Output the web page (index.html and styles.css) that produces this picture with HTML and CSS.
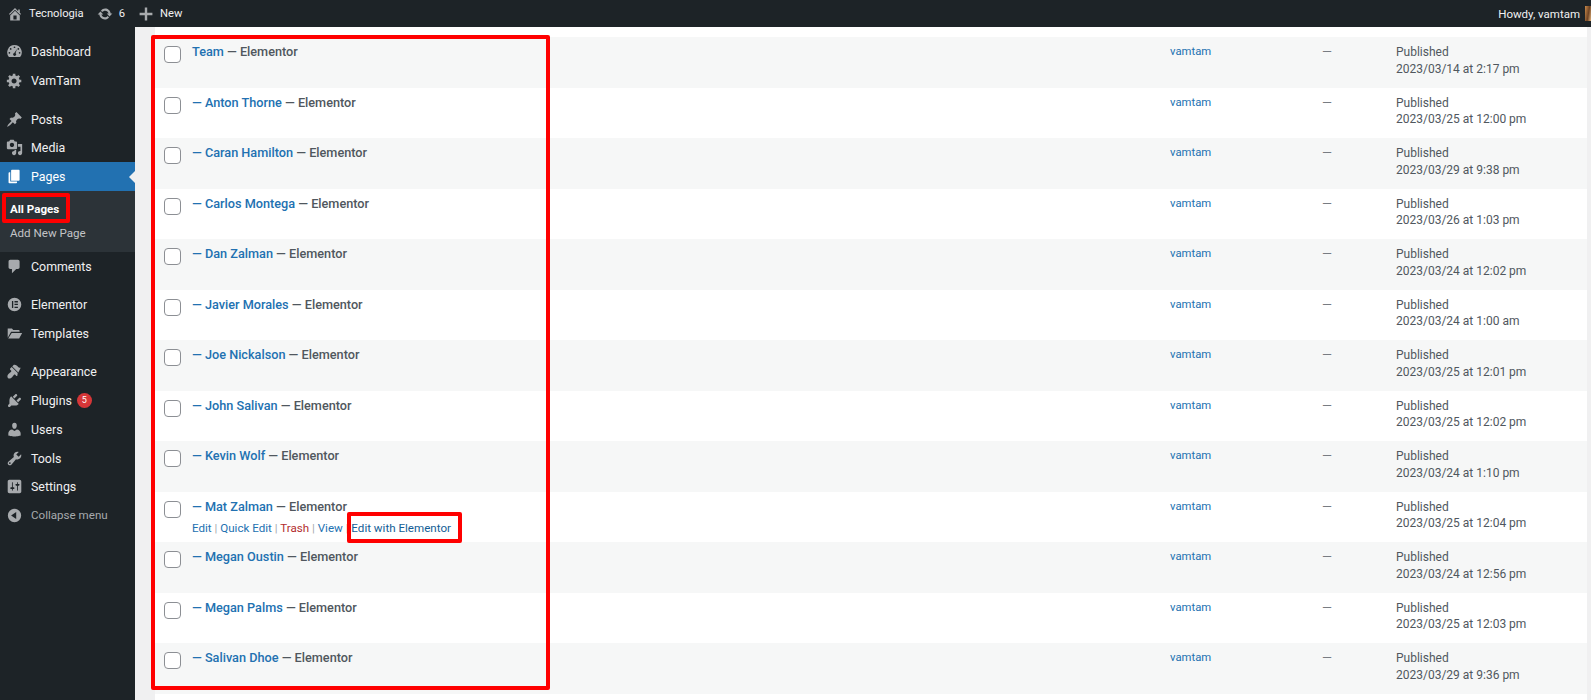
FILE: index.html
```html
<!DOCTYPE html>
<html>
<head>
<meta charset="UTF-8">
<title>Pages - Tecnologia</title>
<link rel="stylesheet" href="styles.css">
</head>
<body>
<div id="adminbar">
	<div class="bar-left">
		<span class="bar-item"><svg viewBox="0 0 20 20"><path d="M16 8.5l1.53 1.53-1.06 1.06L10 4.62l-6.47 6.47-1.06-1.06L10 2.5l4 4v-2h2v4zm-6-2.46l6 5.99V18H4v-5.97zM12 17v-5H8v5h4z"/></svg>Tecnologia</span>
		<span class="bar-item"><svg viewBox="0 0 20 20"><path d="M10.2 3.28c3.53 0 6.43 2.61 6.9 6h2.08l-3.5 4-3.5-4h2.32c-.45-1.97-2.21-3.44-4.3-3.44-1.45 0-2.73.71-3.54 1.8L4.95 5.85c1.26-1.59 3.21-2.57 5.25-2.57zm-.4 13.44c-3.52 0-6.43-2.61-6.9-6H.82l3.5-4c1.17 1.33 2.33 2.67 3.5 4H5.5c.45 1.98 2.21 3.44 4.3 3.44 1.45 0 2.73-.71 3.54-1.8l1.71 1.95c-1.26 1.59-3.21 2.57-5.25 2.57z"/></svg>6</span>
		<span class="bar-item"><svg viewBox="0 0 20 20"><path d="M8.5 2h3v6.500H18v3h-6.500V18h-3v-6.500H2v-3h6.500z"/></svg>New</span>
	</div>
	<div class="bar-right">Howdy, vamtam<span class="avatar"></span></div>
</div>
<div id="wrap">
	<nav id="menu">
		<ul class="group">
			<li><svg viewBox="0 0 20 20"><path d="M10 2.500a8.500 8.500 0 0 0-6.600 13.900h13.200A8.500 8.500 0 0 0 10 2.500zM10 4a1 1 0 1 1 0 2 1 1 0 0 1 0-2zM5.500 6a1 1 0 1 1 0 2 1 1 0 0 1 0-2zm9 0a1 1 0 1 1 0 2 1 1 0 0 1 0-2zM4 10.500a1 1 0 1 1 0 2 1 1 0 0 1 0-2zm12 0a1 1 0 1 1 0 2 1 1 0 0 1 0-2zM13 7l-1.800 5.100a1.700 1.700 0 1 1-1.500-.3z" fill-rule="evenodd"/></svg>Dashboard</li>
			<li><svg viewBox="0 0 20 20"><path d="M18 12h-2.180c-.17.7-.44 1.350-.81 1.930l1.540 1.540-2.100 2.100-1.540-1.540c-.58.36-1.230.63-1.910.79V19H8v-2.180c-.68-.16-1.330-.43-1.910-.79l-1.540 1.540-2.120-2.120 1.540-1.540c-.36-.58-.63-1.230-.79-1.910H1V9.030h2.170c.16-.7.44-1.350.8-1.940L2.430 5.550l2.100-2.100 1.540 1.540c.58-.37 1.240-.64 1.930-.81V2h3v2.180c.68.16 1.330.43 1.910.79l1.540-1.540 2.120 2.120-1.540 1.540c.36.59.64 1.240.8 1.940H18V12zm-8.500 1.500c1.660 0 3-1.340 3-3s-1.340-3-3-3-3 1.340-3 3 1.340 3 3 3z"/></svg>VamTam</li>
		</ul>
		<ul class="group">
			<li><svg viewBox="0 0 20 20"><path d="M10.440 3.020l1.820-1.820 6.360 6.350-1.830 1.820c-1.050-.68-2.480-.57-3.410.36l-.75.750c-.92.930-1.040 2.350-.35 3.410l-1.830 1.820-2.410-2.410-2.800 2.790c-.42.420-3.380 2.710-3.800 2.290s1.870-3.380 2.290-3.800l2.790-2.790-2.410-2.410 1.830-1.830c1.050.69 2.480.57 3.400-.35l.75-.75c.93-.92 1.040-2.350.36-3.410z"/></svg>Posts</li>
			<li><svg viewBox="0 0 20 20"><path d="M13 11V4c0-.55-.45-1-1-1h-1.670L9 1H5L3.670 3H2c-.55 0-1 .45-1 1v7c0 .55.45 1 1 1h10c.55 0 1-.45 1-1zM7 4.500c1.380 0 2.500 1.120 2.500 2.500S8.380 9.500 7 9.500 4.500 8.380 4.500 7 5.620 4.500 7 4.500zM14 6h5v10.500c0 1.380-1.120 2.500-2.500 2.500S14 17.880 14 16.500s1.120-2.500 2.500-2.500c.17 0 .34.020.5.050V9h-3V6zm-4 8.050V13h2v3.500c0 1.380-1.120 2.500-2.500 2.500S7 17.880 7 16.500 8.120 14 9.500 14c.17 0 .34.020.5.050z"/></svg>Media</li>
			<li class="current"><svg viewBox="0 0 20 20"><path d="M6 15V3c0-.55.45-1 1-1h8c.55 0 1 .45 1 1v11c0 .55-.45 1-1 1H6zm-1 1h8v1c0 .55-.45 1-1 1H4c-.55 0-1-.45-1-1V6c0-.55.45-1 1-1h1v11z"/></svg>Pages</li>
		</ul>
		<ul class="submenu">
			<li class="sub-current">All Pages</li>
			<li>Add New Page</li>
		</ul>
		<ul class="group">
			<li><svg viewBox="0 0 20 20"><path d="M5 2h9c1.100 0 2 .9 2 2v7c0 1.100-.9 2-2 2h-2l-5 5v-5H5c-1.100 0-2-.9-2-2V4c0-1.100.9-2 2-2z"/></svg>Comments</li>
		</ul>
		<ul class="group">
			<li><svg viewBox="0 0 20 20"><path fill-rule="evenodd" d="M10 2a8 8 0 1 0 0 16 8 8 0 0 0 0-16zM7 6h1.500v8H7zm3 0h4v1.500h-4zm0 3.200h4v1.500h-4zm0 3.300h4V14h-4z"/></svg>Elementor</li>
			<li><svg viewBox="0 0 20 20"><path d="M2 4h5l1.500 2H15c.6 0 1 .4 1 1v1H6L2 15zM6.700 9.300H19L15.500 16H2.600z"/></svg>Templates</li>
		</ul>
		<ul class="group">
			<li><svg viewBox="0 0 20 20"><path d="M14.480 11.060L7.410 3.990l1.500-1.500c.5-.56 2.300-.47 3.590.32 1.290.8 1.940 2.200 2.770 2.510.83.310 2.020.38 2.020.38zm-.71.71L6.700 4.700 4.930 6.470c-.39.39-.39 1.020 0 1.410l1.060 1.060c.39.39.39 1.030 0 1.420-.6.6-1.780 1.300-2.830 2.350C1.700 14.160 1.100 16.300 2.300 17.500c1.180 1.180 3.340.6 4.800-.86 1.050-1.050 1.750-2.230 2.350-2.830.39-.39 1.030-.39 1.420 0l1.060 1.060c.39.39 1.020.39 1.410 0z"/></svg>Appearance</li>
			<li><svg viewBox="0 0 20 20"><path d="M13.110 4.360L9.870 7.600 8 5.730l3.240-3.240c.35-.34 1.050-.2 1.560.32.520.51.660 1.210.31 1.550zm-8 1.770l.91-1.120 9.010 9.010-1.190.84c-.71.71-2.630 1.160-3.820 1.160H6.140L4.900 17.260c-.59.59-1.540.59-2.120 0-.59-.58-.59-1.530 0-2.120l1.240-1.240v-3.880c0-1.130.48-3.050 1.090-3.890zm7.260 3.970l3.240-3.240c.34-.35 1.040-.21 1.550.31.520.51.660 1.210.31 1.550l-3.240 3.250z"/></svg>Plugins<span class="count">5</span></li>
			<li><svg viewBox="0 0 20 20"><path d="M10 9.250c-2.270 0-2.730-3.440-2.730-3.440C7 4.020 7.820 2 9.970 2c2.160 0 2.980 2.020 2.710 3.810 0 0-.41 3.440-2.680 3.440zm0 2.570L12.720 10c2.390 0 4.520 2.330 4.520 4.530v2.490s-3.650 1.130-7.240 1.130c-3.650 0-7.240-1.130-7.240-1.130v-2.490c0-2.250 1.940-4.530 4.470-4.530z"/></svg>Users</li>
			<li><svg viewBox="0 0 20 20"><path d="M16.680 9.770c-1.340 1.340-3.300 1.670-4.950.99l-5.410 6.520c-.99.99-2.590.99-3.580 0s-.99-2.590 0-3.570l6.520-5.420c-.68-1.650-.35-3.610.99-4.950 1.280-1.280 3.120-1.620 4.720-1.060l-2.890 2.890 2.820 2.820 2.860-2.870c.53 1.580.18 3.390-1.080 4.650zM3.810 16.210c.4.39 1.040.39 1.430 0 .4-.4.4-1.040 0-1.430-.39-.4-1.030-.4-1.430 0-.39.39-.39 1.030 0 1.430z"/></svg>Tools</li>
			<li><svg viewBox="0 0 20 20"><path d="M18 16V4c0-1.100-.9-2-2-2H4c-1.100 0-2 .9-2 2v12c0 1.100.9 2 2 2h12c1.100 0 2-.9 2-2zM8 11h1c.55 0 1 .45 1 1s-.45 1-1 1H8v1.500c0 .28-.22.5-.5.5s-.5-.22-.5-.5V13H6c-.55 0-1-.45-1-1s.45-1 1-1h1V5.500c0-.28.22-.5.5-.5s.5.22.5.5V11zm5-2h-1c-.55 0-1-.45-1-1s.45-1 1-1h1V5.500c0-.28.22-.5.5-.5s.5.22.5.5V7h1c.55 0 1 .45 1 1s-.45 1-1 1h-1v5.500c0 .28-.22.5-.5.5s-.5-.22-.5-.5V9z"/></svg>Settings</li>
			<li class="collapse"><svg viewBox="0 0 20 20"><path fill-rule="evenodd" d="M10 2.160a7.840 7.840 0 1 1 0 15.680 7.840 7.840 0 0 1 0-15.680zM12 6l-6 4 6 4z"/></svg>Collapse menu</li>
		</ul>
	</nav>
	<main id="content">
		<div class="table">
			<div class="row"><span class="check"></span><div class="title"><a>Team</a> — Elementor</div><a class="author">vamtam</a><div class="dash">—</div><div class="date">Published<br>2023/03/14 at 2:17 pm</div></div>
			<div class="row"><span class="check"></span><div class="title"><a>— Anton Thorne</a> — Elementor</div><a class="author">vamtam</a><div class="dash">—</div><div class="date">Published<br>2023/03/25 at 12:00 pm</div></div>
			<div class="row"><span class="check"></span><div class="title"><a>— Caran Hamilton</a> — Elementor</div><a class="author">vamtam</a><div class="dash">—</div><div class="date">Published<br>2023/03/29 at 9:38 pm</div></div>
			<div class="row"><span class="check"></span><div class="title"><a>— Carlos Montega</a> — Elementor</div><a class="author">vamtam</a><div class="dash">—</div><div class="date">Published<br>2023/03/26 at 1:03 pm</div></div>
			<div class="row"><span class="check"></span><div class="title"><a>— Dan Zalman</a> — Elementor</div><a class="author">vamtam</a><div class="dash">—</div><div class="date">Published<br>2023/03/24 at 12:02 pm</div></div>
			<div class="row"><span class="check"></span><div class="title"><a>— Javier Morales</a> — Elementor</div><a class="author">vamtam</a><div class="dash">—</div><div class="date">Published<br>2023/03/24 at 1:00 am</div></div>
			<div class="row"><span class="check"></span><div class="title"><a>— Joe Nickalson</a> — Elementor</div><a class="author">vamtam</a><div class="dash">—</div><div class="date">Published<br>2023/03/25 at 12:01 pm</div></div>
			<div class="row"><span class="check"></span><div class="title"><a>— John Salivan</a> — Elementor</div><a class="author">vamtam</a><div class="dash">—</div><div class="date">Published<br>2023/03/25 at 12:02 pm</div></div>
			<div class="row"><span class="check"></span><div class="title"><a>— Kevin Wolf</a> — Elementor</div><a class="author">vamtam</a><div class="dash">—</div><div class="date">Published<br>2023/03/24 at 1:10 pm</div></div>
			<div class="row"><span class="check"></span><div class="title"><a>— Mat Zalman</a> — Elementor<div class="actions"><a>Edit</a> | <a>Quick Edit</a> | <a class="trash">Trash</a> | <a>View</a> | <a class="edit-el">Edit with Elementor</a></div></div><a class="author">vamtam</a><div class="dash">—</div><div class="date">Published<br>2023/03/25 at 12:04 pm</div></div>
			<div class="row"><span class="check"></span><div class="title"><a>— Megan Oustin</a> — Elementor</div><a class="author">vamtam</a><div class="dash">—</div><div class="date">Published<br>2023/03/24 at 12:56 pm</div></div>
			<div class="row"><span class="check"></span><div class="title"><a>— Megan Palms</a> — Elementor</div><a class="author">vamtam</a><div class="dash">—</div><div class="date">Published<br>2023/03/25 at 12:03 pm</div></div>
			<div class="row"><span class="check"></span><div class="title"><a>— Salivan Dhoe</a> — Elementor</div><a class="author">vamtam</a><div class="dash">—</div><div class="date">Published<br>2023/03/29 at 9:36 pm</div></div>
		</div>
	</main>
</div>
<div class="mark mark-list"></div>
<div class="mark mark-allpages"></div>
<div class="mark mark-elementor"></div>
</body>
</html>
```

FILE: styles.css
```css
html, body {
	margin: 0;
	padding: 0;
	height: 700px;
	overflow: hidden;
}
body {
	position: relative;
	background-color: #f0f0f1;
	font-family: Roboto, "Liberation Sans", sans-serif;
	font-size: 12.7px;
	color: #50575e;
}
ul {
	list-style: none;
	margin: 0;
	padding: 0;
}
a {
	color: #2271b1;
}

#adminbar {
	height: 27px;
	background-color: #1d2327;
	color: #f0f0f1;
	display: flex;
	justify-content: space-between;
	align-items: center;
	font-size: 11.5px;
}
.bar-left {
	display: flex;
	align-items: center;
	padding-left: 7px;
	gap: 13px;
	font-size: 11.2px;
}
.bar-item {
	display: flex;
	align-items: center;
	gap: 6px;
}
.bar-item svg {
	width: 16px;
	height: 16px;
	fill: #a7aaad;
}
.bar-right {
	display: flex;
	align-items: center;
	gap: 5px;
}
.avatar {
	display: block;
	width: 6px;
	height: 15px;
	background: linear-gradient(100deg, #c98a4b 0%, #6e4324 55%, #e0b27c 100%);
}

#wrap {
	display: flex;
	height: 673px;
}
#menu {
	width: 135px;
	flex: none;
	background-color: #1d2327;
	color: #f0f0f1;
	padding-top: 10.5px;
	box-sizing: border-box;
	font-size: 12.4px;
}
#menu .group {
	margin-bottom: 9.6px;
}
#menu .group li {
	height: 28.8px;
	display: flex;
	align-items: center;
	padding-left: 6px;
	gap: 8px;
	position: relative;
}
#menu .group li svg {
	width: 17px;
	height: 17px;
	fill: #a7aaad;
	flex: none;
}
#menu .group li.current {
	background-color: #2271b1;
	color: #fff;
}
#menu .group li.current svg {
	fill: #fff;
}
#menu .group li.current::after {
	content: "";
	position: absolute;
	right: 0;
	top: 9px;
	border: 6px solid transparent;
	border-right-color: #f0f0f1;
	border-left-width: 0;
}
#menu .group:has(.current) {
	margin-bottom: 0;
}
.submenu {
	background-color: #2c3338;
	padding: 7px 0 6.5px 10px;
	font-size: 11.6px;
	color: #c3c4c7;
	margin-bottom: 0;
}
.submenu li {
	height: 23.6px;
	line-height: 23.6px;
}
.sub-current {
	color: #fff;
	font-weight: 700;
}
.count {
	display: inline-block;
	width: 15px;
	height: 15px;
	line-height: 15px;
	margin-left: -3px;
	border-radius: 50%;
	background-color: #d63638;
	color: #fff;
	font-size: 9px;
	text-align: center;
}
#menu .group li.collapse {
	color: #a7aaad;
	font-size: 11.6px;
	height: 27.5px;
}

#content {
	flex: 1;
	padding: 0 4px 0 20px;
}
.table {
	background-color: #fff;
	height: 673px;
	padding-top: 10px;
	box-sizing: border-box;
}
.row {
	height: 50.5px;
	display: grid;
	grid-template-columns: 37px 978px 152px 74px 1fr;
	padding-top: 7px;
	box-sizing: border-box;
	line-height: 16.5px;
}
.row:nth-child(odd) {
	background-color: #f6f7f7;
}
.check {
	display: block;
	width: 15px;
	height: 15px;
	margin: 2px 0 0 9px;
	background-color: #fff;
	border: 1px solid #8c8f94;
	border-radius: 4px;
}
.title {
	font-weight: 500;
}
.title a {
	color: #2271b1;
}
.actions {
	font-weight: 400;
	font-size: 11.6px;
	line-height: 17px;
	margin-top: 5px;
	color: #a7aaad;
}
.actions .trash {
	color: #b32d2e;
}
.actions .edit-el {
	color: #135e96;
}
.author {
	font-size: 11.3px;
}
.date {
	font-size: 12px;
}
.dash {
	color: #787c82;
}

.mark {
	position: absolute;
	border: 4px solid #f00;
	border-radius: 2px;
	box-sizing: border-box;
}
.mark-list {
	left: 151px;
	top: 35px;
	width: 399px;
	height: 655px;
}
.mark-allpages {
	left: 2px;
	top: 193px;
	width: 68px;
	height: 30px;
}
.mark-elementor {
	left: 347px;
	top: 512px;
	width: 115px;
	height: 31px;
}
```
